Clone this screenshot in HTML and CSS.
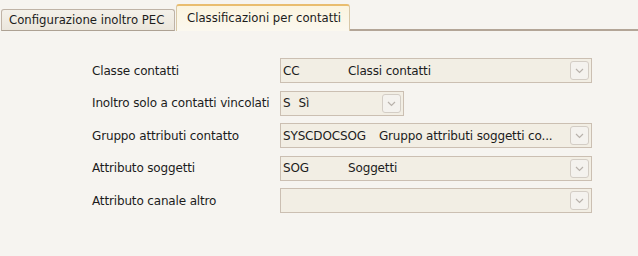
FILE: index.html
```html
<!DOCTYPE html>
<html lang="it">
<head>
<meta charset="utf-8">
<link rel="stylesheet" href="styles.css">
</head>
<body>
<div class="tabbar">
  <div class="tab">Configurazione inoltro PEC</div>
  <div class="tab active">Classificazioni per contatti</div>
  <div class="tabfill"></div>
</div>
<div class="form">
  <div class="row">
    <div class="label">Classe contatti</div>
    <div class="combo wide"><span class="code">CC</span><span class="desc">Classi contatti</span><span class="btn"><svg viewBox="0 0 19 19" width="19" height="19"><path d="M6 8 L9.5 11.5 L13 8" fill="none" stroke="#b8b2ab" stroke-width="1.2"/></svg></span></div>
  </div>
  <div class="row">
    <div class="label">Inoltro solo a contatti vincolati</div>
    <div class="combo narrow"><span class="code short">S</span><span class="desc">Sì</span><span class="btn"><svg viewBox="0 0 19 19" width="19" height="19"><path d="M6 8 L9.5 11.5 L13 8" fill="none" stroke="#b8b2ab" stroke-width="1.2"/></svg></span></div>
  </div>
  <div class="row">
    <div class="label">Gruppo attributi contatto</div>
    <div class="combo wide"><span class="code">SYSCDOCSOG</span><span class="desc">Gruppo attributi soggetti co...</span><span class="btn"><svg viewBox="0 0 19 19" width="19" height="19"><path d="M6 8 L9.5 11.5 L13 8" fill="none" stroke="#b8b2ab" stroke-width="1.2"/></svg></span></div>
  </div>
  <div class="row">
    <div class="label">Attributo soggetti</div>
    <div class="combo wide"><span class="code">SOG</span><span class="desc">Soggetti</span><span class="btn"><svg viewBox="0 0 19 19" width="19" height="19"><path d="M6 8 L9.5 11.5 L13 8" fill="none" stroke="#b8b2ab" stroke-width="1.2"/></svg></span></div>
  </div>
  <div class="row">
    <div class="label">Attributo canale altro</div>
    <div class="combo wide"><span class="desc"></span><span class="btn"><svg viewBox="0 0 19 19" width="19" height="19"><path d="M6 8 L9.5 11.5 L13 8" fill="none" stroke="#b8b2ab" stroke-width="1.2"/></svg></span></div>
  </div>
</div>
</body>
</html>
```
FILE: styles.css
```css
html, body {
  margin: 0;
  padding: 0;
  background: #f6f4f0;
  font-family: "DejaVu Sans", sans-serif;
  font-size: 12px;
  color: #1c1c1c;
}
.tabbar {
  display: flex;
  align-items: flex-end;
  height: 31px;
  padding-left: 1px;
  box-sizing: border-box;
}
.tab {
  height: 22px;
  box-sizing: border-box;
  padding: 0 0 0 7px;
  width: 174px;
  display: flex;
  align-items: center;
  font-size: 11.7px;
  border: 1px solid #bfb3a6;
  border-radius: 3px 3px 0 0;
  background: linear-gradient(#f4f1ea, #ebe6dc);
  border-bottom: 1px solid #ada193;
}
.tab.active {
  height: 27px;
  width: 174px;
  margin-left: 1px;
  padding-left: 10px;
  border: 1px solid #d8c8a8;
  border-top: 2px solid #e9bd6f;
  border-bottom: none;
  background: linear-gradient(#fbf4df, #fbf8ef);
  padding-bottom: 1px;
}
.tabfill {
  flex: 1;
  height: 1px;
  border-bottom: 2px solid #b3a597;
}
.form {
  display: flex;
  flex-direction: column;
  gap: 7.5px;
  padding: 27px 0 0 92px;
}
.row {
  display: flex;
  align-items: center;
  height: 25px;
}
.label {
  width: 188px;
  white-space: nowrap;
  letter-spacing: -0.15px;
}
.combo {
  height: 25px;
  box-sizing: border-box;
  border: 1px solid #cbbfb2;
  background: #f2eee4;
  display: flex;
  align-items: center;
  padding-left: 2px;
  letter-spacing: -0.15px;
}
.combo.wide { width: 312px; }
.combo.narrow { width: 124px; }
.code {
  display: inline-block;
  min-width: 52px;
  margin-right: 13px;
  white-space: nowrap;
}
.code.short {
  min-width: 0;
  margin-right: 8px;
}
.desc {
  flex: 1;
  white-space: nowrap;
  overflow: hidden;
}
.btn {
  width: 19px;
  height: 19px;
  box-sizing: border-box;
  border: 1px solid #d3cdc5;
  border-radius: 3px;
  background: #f4f2ee;
  margin-right: 2px;
  display: flex;
}
.btn svg { display: block; margin: -1px; }
```
